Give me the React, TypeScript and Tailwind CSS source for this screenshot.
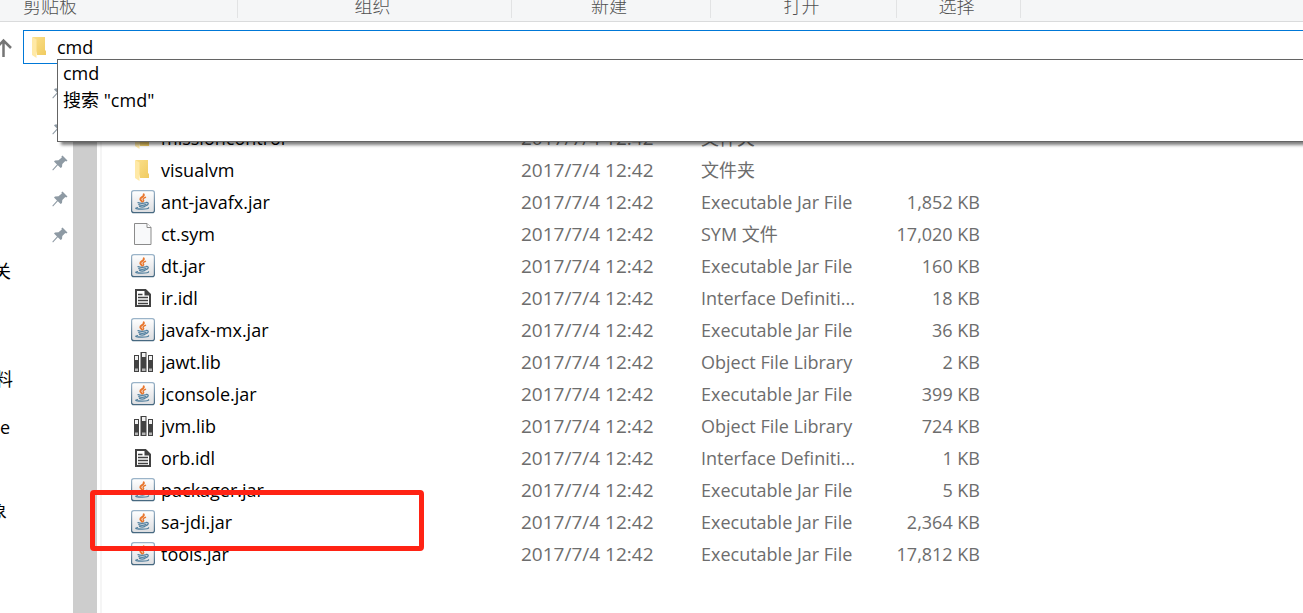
type FileKind = "folder" | "jar" | "page" | "idl" | "lib";

const groups = [
  { name: "组织", width: "w-[274px]" },
  { name: "新建", width: "w-[199px]" },
  { name: "打开", width: "w-[186px]" },
  { name: "选择", width: "w-[124px]" },
];

const modified = "2017/7/4 12:42";

const files: { name: string; kind: FileKind; type: string; size: string }[] = [
  { name: "missioncontrol", kind: "folder", type: "文件夹", size: "" },
  { name: "visualvm", kind: "folder", type: "文件夹", size: "" },
  { name: "ant-javafx.jar", kind: "jar", type: "Executable Jar File", size: "1,852 KB" },
  { name: "ct.sym", kind: "page", type: "SYM 文件", size: "17,020 KB" },
  { name: "dt.jar", kind: "jar", type: "Executable Jar File", size: "160 KB" },
  { name: "ir.idl", kind: "idl", type: "Interface Definiti...", size: "18 KB" },
  { name: "javafx-mx.jar", kind: "jar", type: "Executable Jar File", size: "36 KB" },
  { name: "jawt.lib", kind: "lib", type: "Object File Library", size: "2 KB" },
  { name: "jconsole.jar", kind: "jar", type: "Executable Jar File", size: "399 KB" },
  { name: "jvm.lib", kind: "lib", type: "Object File Library", size: "724 KB" },
  { name: "orb.idl", kind: "idl", type: "Interface Definiti...", size: "1 KB" },
  { name: "packager.jar", kind: "jar", type: "Executable Jar File", size: "5 KB" },
  { name: "sa-jdi.jar", kind: "jar", type: "Executable Jar File", size: "2,364 KB" },
  { name: "tools.jar", kind: "jar", type: "Executable Jar File", size: "17,812 KB" },
];

const FolderIcon = () => (
  <svg width="24" height="24" viewBox="0 0 24 24">
    <defs>
      <linearGradient id="folder" x1="0" y1="0" x2="1" y2="1">
        <stop offset="0" stopColor="#fbe08c" />
        <stop offset="1" stopColor="#f0cb60" />
      </linearGradient>
    </defs>
    <path d="M4.500 2h12.500v13l1 1v4H9z" fill="url(#folder)" />
    <path d="M4 2l4.500 2.500v18.500l-4.500-3z" fill="#ffe9a6" />
  </svg>
);

const JarIcon = () => (
  <svg width="24" height="24" viewBox="0 0 24 24">
    <defs>
      <linearGradient id="tile" x1="0" y1="0" x2="0" y2="1">
        <stop offset="0" stopColor="#ffffff" />
        <stop offset="1" stopColor="#dcdde0" />
      </linearGradient>
      <linearGradient id="edge" x1="0" y1="0" x2="0" y2="1">
        <stop offset="0" stopColor="#9bb4c9" />
        <stop offset="1" stopColor="#466880" />
      </linearGradient>
    </defs>
    <rect x="0.600" y="0.600" width="22.800" height="22" rx="2.200" fill="url(#tile)" stroke="url(#edge)" strokeWidth="1.200" />
    <g fill="none" strokeLinecap="round">
      <path d="M12.700 4.300c1.200 2.400-3.800 3-3.400 5 .2 1 1.200 1.600 1.800 2.400" stroke="#e8762d" strokeWidth="1.900" />
      <path d="M14.500 7.300c-1.800.6-3 1.500-2.200 2.500.6.700.5 1.200-.1 1.800" stroke="#e8762d" strokeWidth="1.400" />
      <path d="M7 12.700c2 .8 6 .8 8.300 0M15.500 12.500c2.400-.4 2.300 2.300-.4 3M7.800 14.600c1.700.7 5 .7 6.800 0M8.500 16.400c1.500.7 4 .7 5.500 0" stroke="#52809f" strokeWidth="1.300" />
      <path d="M6.500 17.500c-4 .9-.8 1.700 4.800 1.700 4 0 6.600-.6 6.300-1.500" stroke="#52809f" strokeWidth="1.200" />
    </g>
  </svg>
);

const PageIcon = () => (
  <svg width="24" height="24" viewBox="0 0 24 24">
    <path d="M3.500 1.500h12.500l4 4v17h-16.500z" fill="#f8f9fa" stroke="#8b8b8b" />
    <path d="M16 1.500v4h4" fill="#fff" stroke="#8b8b8b" />
  </svg>
);

const IdlIcon = () => (
  <svg width="24" height="24" viewBox="0 0 24 24">
    <path d="M5 4h9.500l4.500 4.500V20H5z" fill="#fff" stroke="#424242" strokeWidth="2" />
    <path d="M13.500 3.500v6h6z" fill="#424242" />
    <path d="M7 8.500h4.500M7 11.500h10M7 14.500h10M7 17.500h10" stroke="#424242" strokeWidth="1.300" />
  </svg>
);

const LibIcon = () => (
  <svg width="24" height="24" viewBox="0 0 24 24">
    <g fill="#424242">
      <path d="M3 5h5v17H3zM9.500 2h6v20h-6zM17 5h5v17h-5z" />
    </g>
    <g fill="#f1f1f1">
      <path d="M4 6h3v4H4zM11 3h3.500v4H11zM18 6h3v4h-3z" />
    </g>
    <g fill="#b5b5b5">
      <path d="M4 18.500h3V21H4zM11 18.500h3.500V21H11zM18 18.500h3V21h-3z" />
    </g>
  </svg>
);

const PinIcon = () => (
  <svg width="16" height="16" viewBox="0 0 16 16">
    <path d="M10.500 0.500L15.500 5.500L14.300 6.500L13.300 6L10.300 9L10 12L8.700 13L5.800 10.200L1 15.500L0.300 14.800L5 9.500L2 6.500L3 5.500L6.500 5.200L9.800 2.500L9.400 1.400Z" fill="#8e9aa4" />
  </svg>
);

const icons = {
  folder: FolderIcon,
  jar: JarIcon,
  page: PageIcon,
  idl: IdlIcon,
  lib: LibIcon,
};

const Ribbon = () => (
  <header className="flex h-[22px] overflow-hidden border-b border-[#dadbdc] bg-[#f5f6f7] pb-[3px] font-light text-[#505050]">
    <div className="flex w-[238px] shrink-0 items-end border-r border-[#e2e3e4] pl-[23px] leading-6">
      剪贴板
    </div>
    {groups.map((group) => (
      <div
        key={group.name}
        className={`flex shrink-0 items-end justify-center border-r border-[#e2e3e4] pr-1 leading-6 ${group.width}`}
      >
        {group.name}
      </div>
    ))}
  </header>
);

const AddressBar = () => (
  <div className="relative z-10 flex pt-2">
    <button aria-label="上移" className="flex w-[23px] shrink-0 items-center">
      <svg width="14" height="20" viewBox="0 0 14 20">
        <path d="M3.500 20V4M-3 10.500L3.500 3.500L11 11" fill="none" stroke="#757575" strokeWidth="2.500" />
      </svg>
    </button>
    <label className="flex h-[34px] flex-1 items-center border border-r-0 border-[#0078d7] bg-white pl-1">
      <FolderIcon />
      <input
        aria-label="地址"
        defaultValue="cmd"
        className="ml-[5px] min-w-0 flex-1 text-black outline-none"
      />
    </label>
    <ul className="absolute top-[37px] right-0 left-[57px] h-[83px] border border-r-0 border-[#646464] bg-white text-black shadow-[4px_3px_3px_rgba(0,0,0,0.5)]">
      <li>
        <button className="block w-full pl-[5px] text-left leading-[27px]">cmd</button>
      </li>
      <li>
        <button className="block w-full pl-[5px] text-left leading-[27px]">搜索 "cmd"</button>
      </li>
    </ul>
  </div>
);

const Sidebar = () => (
  <nav className="w-[73px] shrink-0 overflow-hidden pt-[9px] text-black">
    {[1, 2, 3, 4, 5].map((pin) => (
      <div key={pin} className="flex h-9 items-center justify-end pr-[5px]">
        <PinIcon />
      </div>
    ))}
    <div className="flex h-9 w-[11px] items-center justify-end">关</div>
    <div className="mt-[72px] flex h-9 w-[13px] items-center justify-end">料</div>
    <div className="mt-3 flex h-9 w-[10px] items-center justify-end">e</div>
    <div className="mt-12 flex h-9 w-[7px] items-center justify-end">象</div>
  </nav>
);

const FileList = () => (
  <main className="relative ml-[3px] min-w-0 flex-1 border-l-2 border-[#f5f5f5] pt-[58px] pl-[29px]">
    <table className="w-[849px] table-fixed text-left text-[#6d6d6d]">
      <colgroup>
        <col className="w-[390px]" />
        <col className="w-[180px]" />
        <col className="w-[170px]" />
        <col />
      </colgroup>
      <tbody>
        {files.map((file) => {
          const Icon = icons[file.kind];
          return (
            <tr key={file.name} className="h-8">
              <td className="p-0 text-black">
                <div className="flex items-center gap-[6px]">
                  <Icon />
                  {file.name}
                </div>
              </td>
              <td className="p-0 text-[19px]">{modified}</td>
              <td className="p-0 whitespace-nowrap">{file.type}</td>
              <td className="p-0 text-right">{file.size}</td>
            </tr>
          );
        })}
      </tbody>
    </table>
    <div className="absolute top-[426px] -left-3 h-[61px] w-[334px] rounded-[4px] border-[5px] border-[#ff2314]" />
  </main>
);

const App = () => {
  return (
    <div className="flex min-h-screen flex-col overflow-hidden bg-white font-['Open_Sans','Noto_Sans_CJK_SC',sans-serif] text-[18px] leading-6">
      <Ribbon />
      <AddressBar />
      <div className="flex flex-1">
        <Sidebar />
        <div className="w-6 shrink-0 bg-[#cdcdcd]" />
        <FileList />
      </div>
    </div>
  );
};

export default App;
